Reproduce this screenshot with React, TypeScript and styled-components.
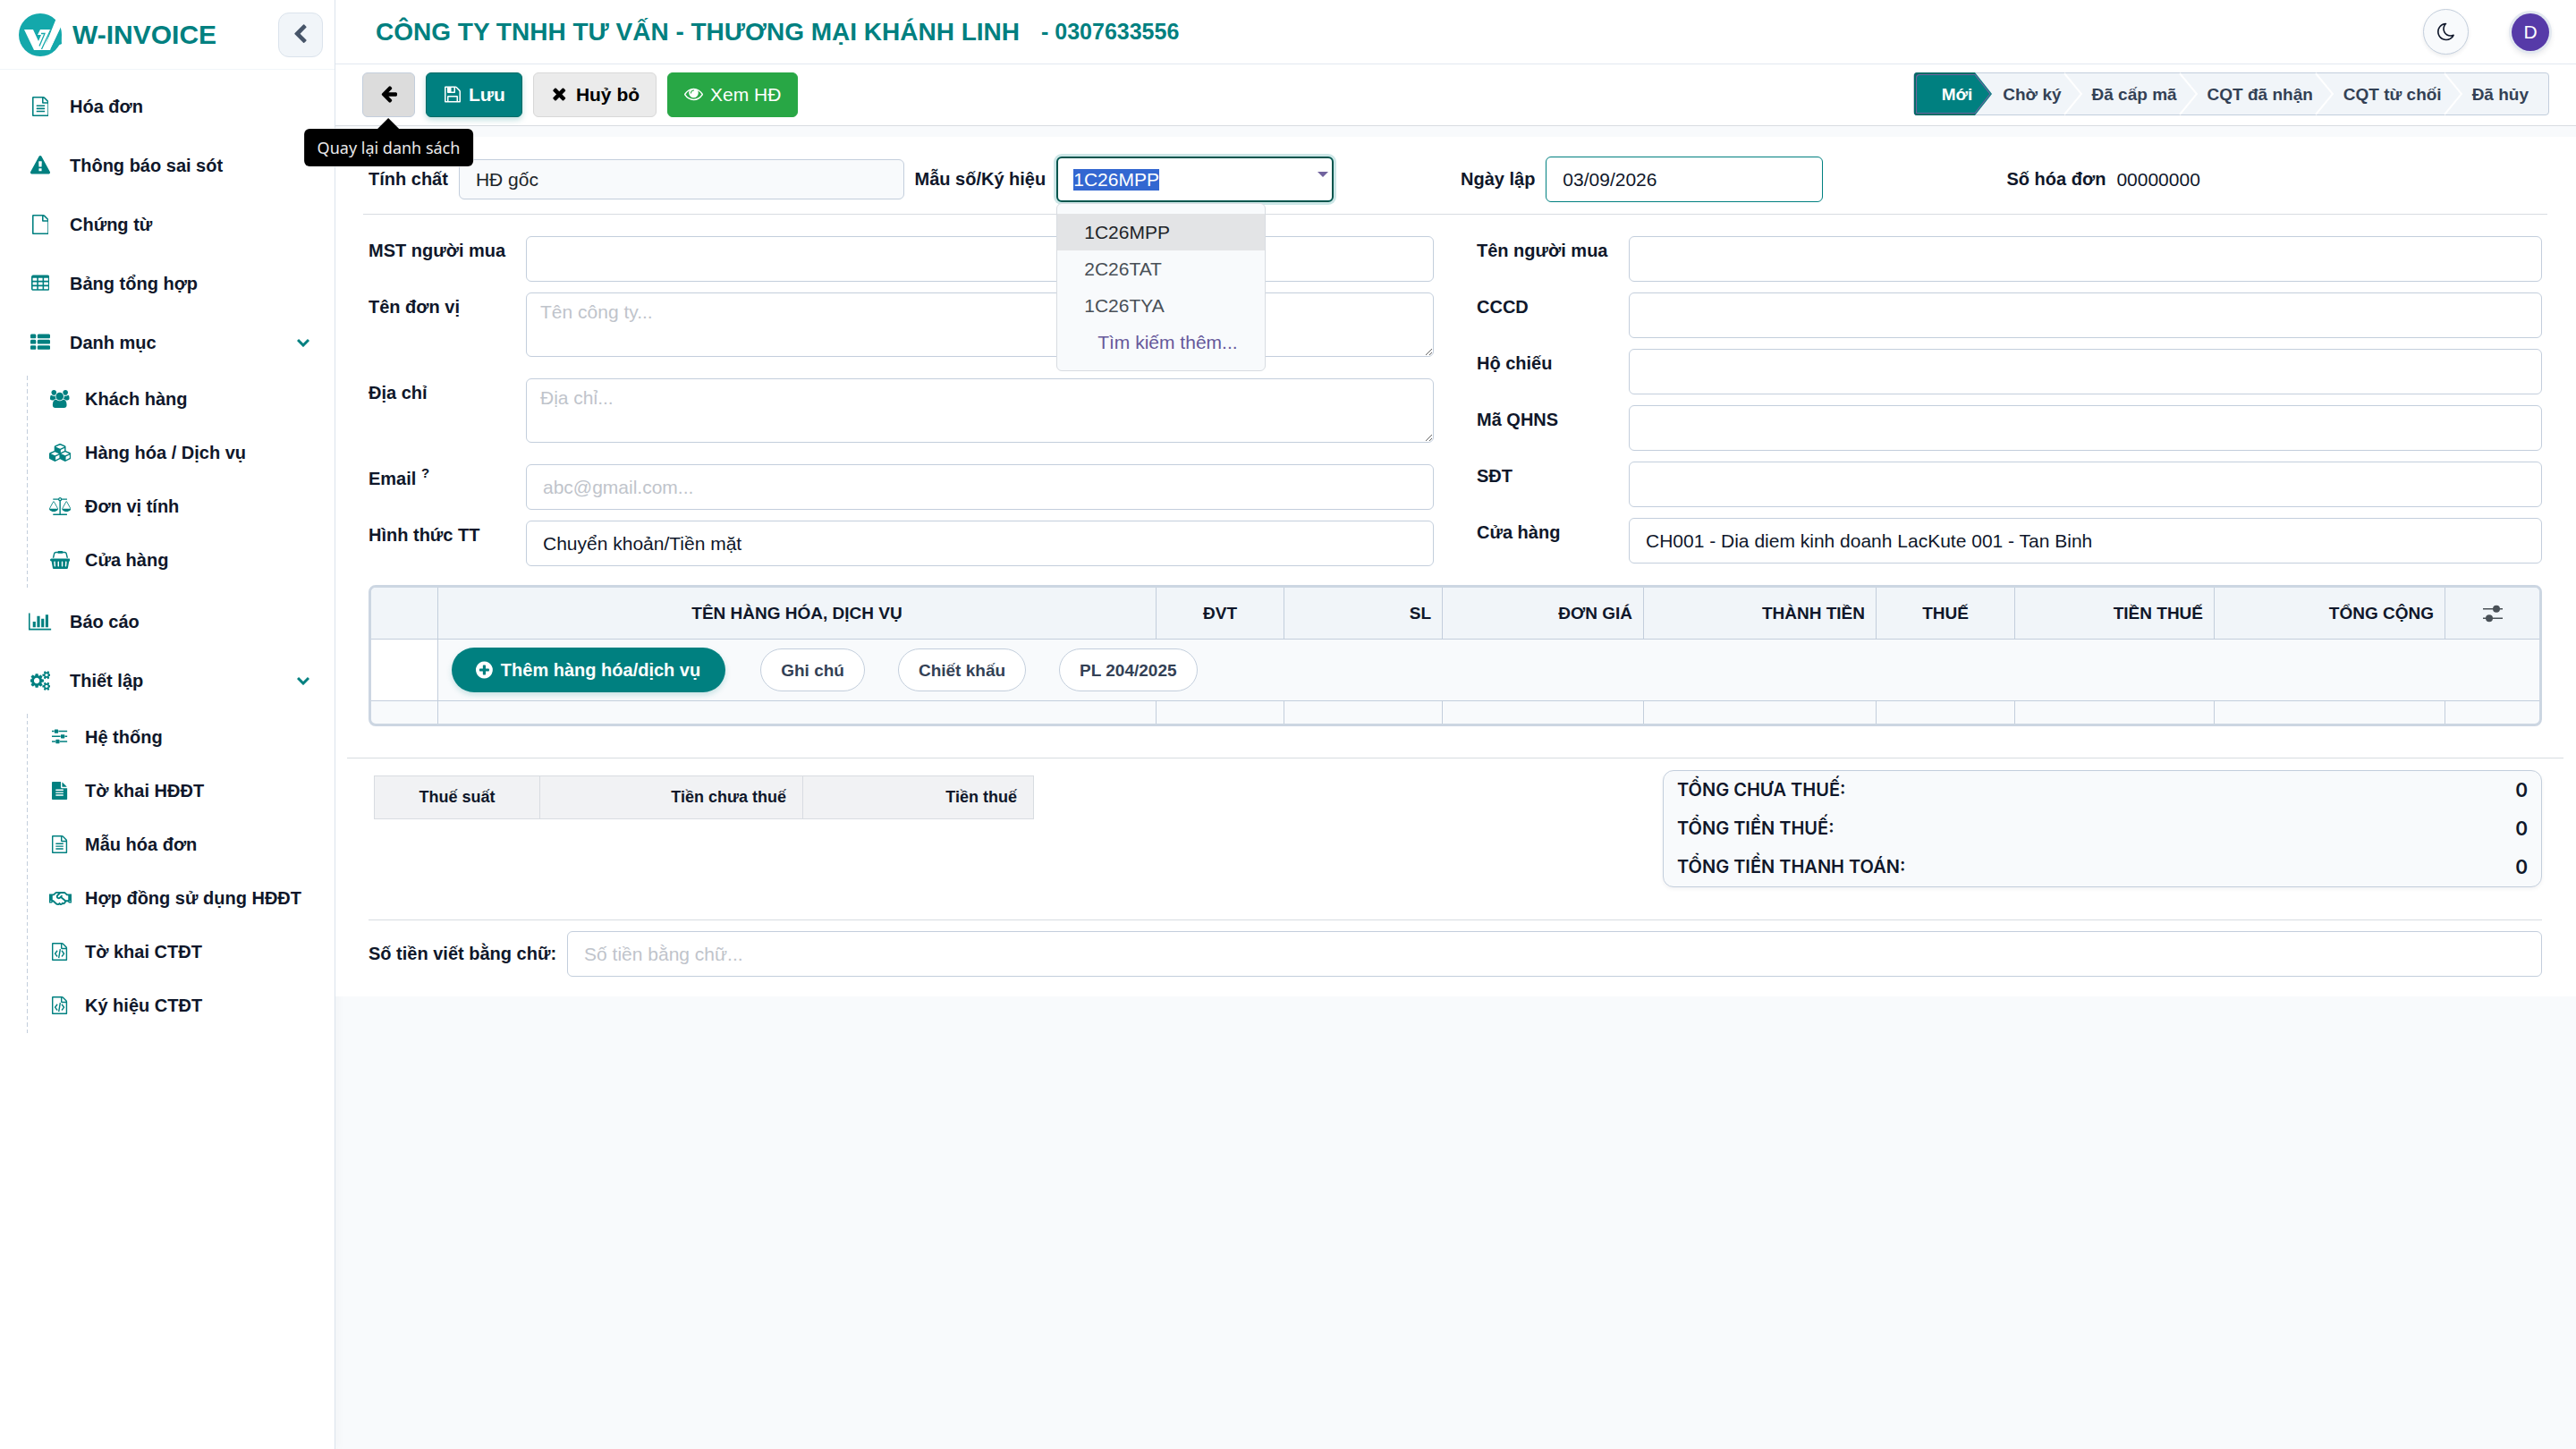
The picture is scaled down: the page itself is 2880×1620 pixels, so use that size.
import React, { useEffect, useRef } from "react";
import styled, { createGlobalStyle, css } from "styled-components";
import { FaRegHandshake } from "react-icons/fa";

const teal = "#008080";
const ink = "#0f172a";
const line = "#c3cedc";
const rule = "#d8dce1";
const soft = "#f8fafc";

const GlobalStyle = createGlobalStyle`
  *, *::before, *::after { box-sizing: border-box; }
  html, body, #root { height: 100%; }
  body {
    margin: 0;
    background: ${soft};
    color: ${ink};
    font-family: "Liberation Sans", Arial, sans-serif;
    font-size: 21px;
    line-height: 31px;
  }
  button, input, textarea { font: inherit; color: inherit; }
  button { cursor: pointer; }
`;

/* ---------- icons ---------- */

type Glyph = { box: string; d: string };

const FILE_OUTLINE =
  "M1596 380q28 28 48 76t20 88v1152q0 40-28 68t-68 28h-1344q-40 0-68-28t-28-68v-1600q0-40 28-68t68-28h896q40 0 88 20t76 48zm-444-244v376h376q-10-29-22-41l-313-313q-12-12-41-22zm384 1528v-1024h-416q-40 0-68-28t-28-68v-416h-768v1536h1280z";
const cell = (x: number, y: number) =>
  `M${x + 352} ${y + 224}v-192q0-14-9-23t-23-9h-320q-14 0-23 9t-9 23v192q0 14 9 23t23 9h320q14 0 23-9t9-23z`;
const bar = (x: number, y: number, w: number) =>
  `M${x + w} ${y + 96}v192q0 40-28 68t-68 28h-${w - 192}q-40 0-68-28t-28-68v-192q0-40 28-68t68-28h${w - 192}q40 0 68 28t28 68z`;
const smallGear = (y: number) =>
  `M1856 ${y}v140q0 16-149 31-12 27-30 52 51 113 51 138 0 4-4 7-122 71-124 71-8 0-46-47t-52-68q-20 2-30 2t-30-2q-14 21-52 68t-46 47q-2 0-124-71-4-3-4-7 0-25 51-138-18-25-30-52-149-15-149-31v-140q0-16 149-31 13-29 30-52-51-113-51-138 0-4 4-7 4-2 35-20t59-34 30-16q8 0 46 46.5t52 67.5q20-2 30-2t30 2q51-71 92-112l6-2q4 0 124 70 4 3 4 7 0 25-51 138 17 23 30 52 149 15 149 31z`;

const glyphs: Record<string, Glyph> = {
  fileText: {
    box: "128 0 1536 1792",
    d: FILE_OUTLINE +
      "M512 800q0-14 9-23t23-9h704q14 0 23 9t9 23v64q0 14-9 23t-23 9h-704q-14 0-23-9t-9-23v-64zm736 224q14 0 23 9t9 23v64q0 14-9 23t-23 9h-704q-14 0-23-9t-9-23v-64q0-14 9-23t23-9h704zm0 256q14 0 23 9t9 23v64q0 14-9 23t-23 9h-704q-14 0-23-9t-9-23v-64q0-14 9-23t23-9h704z",
  },
  file: { box: "128 0 1536 1792", d: FILE_OUTLINE },
  fileCode: {
    box: "128 0 1536 1792",
    d: FILE_OUTLINE +
      "M608 768q8-11 21-12.5t24 6.5l51 38q11 8 12.5 21t-6.5 24l-182 243 182 243q8 11 6.5 24t-12.5 21l-51 38q-11 8-24 6.5t-21-12.5l-226-301q-14-19 0-38zM1184 768q-8-11-21-12.5t-24 6.5l-51 38q-11 8-12.5 21t6.5 24l182 243-182 243q-8 11-6.5 24t12.5 21l51 38q11 8 24 6.5t21-12.5l226-301q14-19 0-38zM788 1526q-13-2-20.5-13t-5.5-24l138-831q2-13 13-20.5t24-5.5l63 10q13 2 20.5 13t5.5 24l-138 831q-2 13-13 20.5t-24 5.5z",
  },
  fileSolid: {
    box: "128 0 1536 1792",
    d: "M1596 476q14 14 28 36h-472v-472q22 14 36 28zm-476 164h544v1056q0 40-28 68t-68 28h-1344q-40 0-68-28t-28-68v-1600q0-40 28-68t68-28h800v544q0 40 28 68t68 28zm160 736v-64q0-14-9-23t-23-9h-704q-14 0-23 9t-9 23v64q0 14 9 23t23 9h704q14 0 23-9t9-23zm0-256v-64q0-14-9-23t-23-9h-704q-14 0-23 9t-9 23v64q0 14 9 23t23 9h704q14 0 23-9t9-23zm0-256v-64q0-14-9-23t-23-9h-704q-14 0-23 9t-9 23v64q0 14 9 23t23 9h704q14 0 23-9t9-23z",
  },
  warning: {
    box: "0 0 1792 1792",
    d: "M1024 1375v-190q0-14-9.5-23.5t-22.5-9.5h-192q-13 0-22.5 9.5t-9.5 23.5v190q0 14 9.5 23.5t22.5 9.5h192q13 0 22.5-9.5t9.5-23.5zm-2-374l18-459q0-12-10-19-13-11-24-11h-220q-11 0-24 11-10 7-10 21l17 457q0 10 10 16.5t24 6.5h185q14 0 23.5-6.5t10.5-16.5zm-14-934l768 1408q35 63-2 126-17 29-46.5 46t-63.5 17h-1536q-34 0-63.5-17t-46.5-46q-37-63-2-126l768-1408q17-31 47-49t65-18 65 18 47 49z",
  },
  table: {
    box: "64 0 1664 1792",
    d: "M1728 288v1088q0 66-47 113t-113 47h-1344q-66 0-113-47t-47-113v-1088q0-66 47-113t113-47h1344q66 0 113 47t47 113z" +
      [224, 736, 1248].map((x) => [384, 768, 1152].map((y) => cell(x, y)).join("")).join(""),
  },
  list: {
    box: "0 0 1792 1792",
    d: [128, 640, 1152].map((y) => bar(0, y, 512) + bar(640, y, 1152)).join(""),
  },
  users: {
    box: "64 0 1920 1792",
    d: "M657 896q-162 5-265 128h-134q-82 0-138-40.5t-56-118.5q0-353 124-353 6 0 43.5 21t97.5 42.5 119 21.5q67 0 133-23-5 37-5 66 0 159 93 256zm1071 637q0 120-73 189.5t-194 69.5h-874q-121 0-194-69.5t-73-189.5q0-53 3.5-103.5t14-109 26.5-108.5 43-97.5 62-81 85.5-53.5 111.5-20q10 0 43 21.5t73 48 107 48 135 21.5 135-21.5 107-48 73-48 43-21.5q61 0 111.5 20t85.5 53.5 62 81 43 97.5 26.5 108.5 14 109 3.5 103.5zm-1024-1277q0 106-75 181t-181 75-181-75-75-181 75-181 181-75 181 75 75 181zm704 384q0 159-112.5 271.5t-271.5 112.5-271.5-112.5-112.5-271.5 112.5-271.5 271.5-112.5 271.5 112.5 112.5 271.5zm576 225q0 78-56 118.5t-138 40.5h-134q-103-123-265-128 93-97 93-256 0-29-5-66 66 23 133 23 59 0 119-21.5t97.5-42.5 43.5-21q124 0 124 353zm-128-609q0 106-75 181t-181 75-181-75-75-181 75-181 181-75 181 75 75 181z",
  },
  cubes: {
    box: "0 0 2176 1792",
    d: "M640 1632l384-192v-314l-384 164v342zm-64-454l404-173-404-173-404 173zm1088 454l384-192v-314l-384 164v342zm-64-454l404-173-404-173-404 173zm-448-293l384-165v-266l-384 164v267zm-64-379l441-189-441-189-441 189zm1088 518v416q0 36-19 67t-52 47l-448 224q-25 14-57 14t-57-14l-448-224q-4-2-7-4-2 2-7 4l-448 224q-25 14-57 14t-57-14l-448-224q-33-16-52-47t-19-67v-416q0-38 21.5-70t56.5-48l434-186v-400q0-38 21.5-70t56.5-48l448-192q23-10 50-10t50 10l448 192q35 16 56.5 48t21.5 70v400l434 186q36 16 57 48t21 70z",
  },
  scale: {
    box: "0 0 2176 1792",
    d: "M1728 448l-384 704h768zm-1280 0l-384 704h768zm821-192q-14 40-45.5 71.5t-71.5 45.5v1291h608q14 0 23 9t9 23v64q0 14-9 23t-23 9h-1344q-14 0-23-9t-9-23v-64q0-14 9-23t23-9h608v-1291q-40-14-71.5-45.5t-45.5-71.5h-491q-14 0-23-9t-9-23v-64q0-14 9-23t23-9h491q21-57 70-92.5t111-35.5 111 35.5 70 92.5h491q14 0 23 9t9 23v64q0 14-9 23t-23 9h-491zm-181 16q33 0 56.5-23.5t23.5-56.5-23.5-56.5-56.5-23.5-56.5 23.5-23.5 56.5 23.5 56.5 56.5 23.5zm1088 880q0 73-46.5 131t-117.5 91-144.5 49.5-139.5 16.5-139.5-16.5-144.5-49.5-117.5-91-46.5-131q0-11 35-81t92-174.5 107-195.5 102-184 56-100q18-33 56-33t56 33q4 7 56 100t102 184 107 195.5 92 174.5 35 81zm-1280 0q0 73-46.5 131t-117.5 91-144.5 49.5-139.5 16.5-139.5-16.5-144.5-49.5-117.5-91-46.5-131q0-11 35-81t92-174.5 107-195.5 102-184 56-100q18-33 56-33t56 33q4 7 56 100t102 184 107 195.5 92 174.5 35 81z",
  },
  basket: {
    box: "128 0 2048 1792",
    d: "M2048 768q53 0 90.5 37.5t37.5 90.5-37.5 90.5-90.5 37.5h-15l-115 662q-8 46-44 76t-82 30h-1280q-46 0-82-30t-44-76l-115-662h-15q-53 0-90.5-37.5t-37.5-90.5 37.5-90.5 90.5-37.5h1792zm-1435 800q26-2 43.5-22.5t15.5-46.5l-32-416q-2-26-22.5-43.5t-46.5-15.5-43.5 22.5-15.5 46.5l32 416q2 25 20.5 42t43.5 17h5zm411-64v-416q0-26-19-45t-45-19-45 19-19 45v416q0 26 19 45t45 19 45-19 19-45zm384 0v-416q0-26-19-45t-45-19-45 19-19 45v416q0 26 19 45t45 19 45-19 19-45zm352 5l32-416q2-26-15.5-46.5t-43.5-22.5-46.5 15.5-22.5 43.5l-32 416q-2 26 15.5 46.5t43.5 22.5h5q25 0 43.5-17t20.5-42zm-1156-1217l-93 412h-132l101-441q19-88 89-143.5t160-55.5h167q0-26 19-45t45-19h384q26 0 45 19t19 45h167q90 0 160 55.5t89 143.5l101 441h-132l-93-412q-11-44-45.5-72t-79.5-28h-167q0 26-19 45t-45 19h-384q-26 0-45-19t-19-45h-167q-45 0-79.5 28t-45.5 72z",
  },
  chart: {
    box: "0 0 2048 1792",
    d: "M640 896v512h-256v-512h256zm384-512v1024h-256v-1024h256zm1024 1152v128h-2048v-1536h128v1408h1920zm-640-896v768h-256v-768h256zm384-384v1152h-256v-1152h256z",
  },
  gears: {
    box: "0 0 1856 1792",
    d: "M832 896q0-106-75-181t-181-75-181 75-75 181 75 181 181 75 181-75 75-181zm768 512q0-52-38-90t-90-38-90 38-38 90q0 53 37.5 90.5t90.5 37.5 90.5-37.5 37.5-90.5zm0-1024q0-52-38-90t-90-38-90 38-38 90q0 53 37.5 90.5t90.5 37.5 90.5-37.5 37.5-90.5zm-384 421v185q0 10-7 19.5t-16 10.5l-155 24q-11 35-32 76 34 48 90 115 7 11 7 20 0 12-7 19-23 30-82.5 89.5t-78.5 59.5q-11 0-21-7l-115-90q-37 19-77 31-11 108-23 155-7 24-30 24h-186q-11 0-20-7.5t-10-17.5l-23-153q-34-10-75-31l-118 89q-7 7-20 7-11 0-21-8-144-133-144-160 0-9 7-19 10-14 41-53t47-61q-23-44-35-82l-152-24q-10-1-17-9.5t-7-19.5v-185q0-10 7-19.5t16-10.5l155-24q11-35 32-76-34-48-90-115-7-11-7-20 0-12 7-20 22-30 82-89t79-59q11 0 21 7l115 90q34-18 77-32 11-108 23-154 7-24 30-24h186q11 0 20 7.5t10 17.5l23 153q34 10 75 31l118-89q8-7 20-7 11 0 21 8 144 133 144 160 0 8-7 19-12 16-42 54t-45 60q23 48 34 82l152 23q10 2 17 10.5t7 19.5z" +
      smallGear(1338) + smallGear(314),
  },
  sliders: {
    box: "0 128 1536 1792",
    d: "M352 1408v128h-352v-128h352zm352-128q26 0 45 19t19 45v256q0 26-19 45t-45 19h-256q-26 0-45-19t-19-45v-256q0-26 19-45t45-19h256zm160-384v128h-864v-128h864zm-640-512v128h-224v-128h224zm1312 1024v128h-736v-128h736zm-960-1152q26 0 45 19t19 45v256q0 26-19 45t-45 19h-256q-26 0-45-19t-19-45v-256q0-26 19-45t45-19h256zm640 512q26 0 45 19t19 45v256q0 26-19 45t-45 19h-256q-26 0-45-19t-19-45v-256q0-26 19-45t45-19h256zm320 128v128h-224v-128h224zm0-512v128h-864v-128h864z",
  },
  chevronLeft: {
    box: "384 0 1088 1792",
    d: "M1427 301l-531 531 531 531q19 19 19 45t-19 45l-166 166q-19 19-45 19t-45-19l-742-742q-19-19-19-45t19-45l742-742q19-19 45-19t45 19l166 166q19 19 19 45t-19 45z",
  },
  arrowLeft: {
    box: "128 64 1536 1792",
    d: "M1664 896v128q0 53-32.5 90.5t-84.5 37.5h-704l293 294q38 36 38 90t-38 90l-75 76q-37 37-90 37-52 0-91-37l-651-652q-37-37-37-90 0-52 37-91l651-650q38-38 91-38 52 0 90 38l75 74q38 38 38 91t-38 91l-293 293h704q52 0 84.5 37.5t32.5 90.5z",
  },
  floppy: {
    box: "128 0 1536 1792",
    d: "M512 1536h768v-384h-768v384zm896 0h128v-896q0-14-10-38.5t-20-34.5l-281-281q-10-10-34-20t-39-10v416q0 40-28 68t-68 28h-576q-40 0-68-28t-28-68v-416h-128v1280h128v-416q0-40 28-68t68-28h832q40 0 68 28t28 68v416zm-384-928v-320q0-13-9.5-22.5t-22.5-9.5h-192q-13 0-22.5 9.5t-9.5 22.5v320q0 13 9.5 22.5t22.5 9.5h192q13 0 22.5-9.5t9.5-22.5zm640 32v928q0 40-28 68t-68 28h-1344q-40 0-68-28t-28-68v-1344q0-40 28-68t68-28h928q40 0 88 20t76 48l280 280q28 28 48 76t20 88z",
  },
  times: {
    box: "192 64 1408 1792",
    d: "M1490 1322q0 40-28 68l-136 136q-28 28-68 28t-68-28l-294-294-294 294q-28 28-68 28t-68-28l-136-136q-28-28-28-68t28-68l294-294-294-294q-28-28-28-68t28-68l136-136q28-28 68-28t68 28l294 294 294-294q28-28 68-28t68 28l136 136q28 28 28 68t-28 68l-294 294 294 294q28 28 28 68z",
  },
  eye: {
    box: "0 64 1792 1792",
    d: "M1664 960q-152-236-381-353 61 104 61 225 0 185-131.5 316.5t-316.5 131.5-316.5-131.5-131.5-316.5q0-121 61-225-229 117-381 353 133 205 333.5 326.5t434.5 121.5 434.5-121.5 333.5-326.5zm-720-384q0-20-14-34t-34-14q-125 0-214.5 89.5t-89.5 214.5q0 20 14 34t34 14 34-14 14-34q0-86 61-147t147-61q20 0 34-14t14-34zm848 384q0 34-20 69-140 230-376.5 368.5t-499.5 138.5-499.5-139-376.5-368q-20-35-20-69t20-69q140-229 376.5-368t499.5-139 499.5 139 376.5 368q20 35 20 69z",
  },
  plusCircle: {
    box: "128 0 1536 1792",
    d: "M1344 960v-128q0-26-19-45t-45-19h-256v-256q0-26-19-45t-45-19h-128q-26 0-45 19t-19 45v256h-256q-26 0-45 19t-19 45v128q0 26 19 45t45 19h256v256q0 26 19 45t45 19h128q26 0 45-19t19-45v-256h256q26 0 45-19t19-45zm320-64q0 209-103 385.5t-279.5 279.5-385.5 103-385.5-103-279.5-279.5-103-385.5 103-385.5 279.5-279.5 385.5-103 385.5 103 279.5 279.5 103 385.5z",
  },
  moon: {
    box: "128 0 1536 1792",
    d: "M1390 1303q-54 9-110 9-182 0-337-90t-245-245-90-337q0-192 104-357-201 60-328.5 229t-127.5 384q0 130 51 248.5t136.5 204 204 136.5 248.5 51q144 0 273.5-61.5t220.5-171.5zm203-85q-94 203-283.5 324.5t-413.5 121.5q-156 0-298-61t-245-164-164-245-61-298q0-153 57.5-292.5t156-241.5 235.5-164.5 290-68.5q44-2 61 39 18 41-15 72-86 78-131.5 181.5t-45.5 218.5q0 148 73 273t198 198 273 73q118 0 228-51 41-18 72 13 14 14 17.5 34t-4.5 38z",
  },
};

function Icon({ name, size }: { name: string; size: number }) {
  const g = glyphs[name];
  return (
    <svg height={size} viewBox={g.box} fill="currentColor" fillRule="evenodd" aria-hidden="true">
      <path d={g.d} />
    </svg>
  );
}

function Logo() {
  return (
    <svg width="48" height="48" viewBox="0 0 48 48" aria-hidden="true">
      <circle cx="24" cy="24" r="24" fill="#14a8ab" />
      <path d="M41.5 6.500 48 14 46 18 35 41H17L6 18h10l6 13 3-7h-4l3-6h11.500l-5.500 17z" fill="#fff" />
      <path d="M47 15.500 35.500 40 48 34z" fill="#14a8ab" />
      <path d="M35.500 18.500 25.500 40M25 22.500l4 0-6 14" fill="none" stroke="#14a8ab" strokeWidth="1.300" />
    </svg>
  );
}

/* ---------- sidebar ---------- */

const Shell = styled.div`
  display: grid;
  grid-template-columns: 375px minmax(0, 1fr);
  min-height: 100%;
`;
const Sidebar = styled.aside`
  background: #fff;
  border-right: 1px solid #dbe3ec;
  box-shadow: 2px 0 12px rgba(15, 23, 42, 0.03);
`;
const Brand = styled.div`
  display: flex;
  align-items: center;
  height: 78px;
  padding: 0 13px 0 21px;
  border-bottom: 1px solid #f1f5f9;
`;
const BrandName = styled.strong`
  flex: 1;
  margin-left: 12px;
  color: ${teal};
  font-size: 30px;
`;
const Collapse = styled.button`
  display: grid;
  place-items: center;
  width: 50px;
  height: 50px;
  padding: 0;
  border: 1px solid #dbe3ec;
  border-radius: 12px;
  background: #f1f5f9;
  color: #475569;
`;
const Nav = styled.nav`
  padding-top: 8px;
  font-size: 20px;
  font-weight: 700;
`;
const NavLink = styled.a`
  display: grid;
  grid-template-columns: 34px 1fr auto;
  column-gap: 16px;
  align-items: center;
  height: 66px;
  padding: 0 28px;
  color: ${ink};
  text-decoration: none;
`;
const IconCell = styled.span`
  display: grid;
  place-items: center;
  color: ${teal};
`;
const SubMenu = styled.div`
  display: grid;
  row-gap: 8px;
  margin: 4px 0 2px 30px;
  padding: 0 0 8px 20px;
  background: repeating-linear-gradient(
      ${line} 0 5px, transparent 5px 8px, ${line} 8px 12px, transparent 12px 15px
    ) 0 0 / 1px 100% no-repeat;
`;
const SubLink = styled.a`
  display: grid;
  grid-template-columns: 34px 1fr;
  column-gap: 11px;
  align-items: center;
  height: 52px;
  color: ${ink};
  text-decoration: none;
`;

function NavItem({ icon, label, open }: { icon: string; label: string; open?: boolean }) {
  return (
    <NavLink href="#">
      <IconCell><Icon name={icon} size={22} /></IconCell>
      {label}
      {open && (
        <svg width="14" height="10" viewBox="0 0 14 10" fill="none" stroke={teal} strokeWidth="3" aria-hidden="true">
          <path d="M1 2 7 8l6-6" />
        </svg>
      )}
    </NavLink>
  );
}
function SubItem({ icon, label }: { icon: string; label: string }) {
  return (
    <SubLink href="#">
      <IconCell>{icon === "handshake" ? <FaRegHandshake size={25} /> : <Icon name={icon} size={20} />}</IconCell>
      {label}
    </SubLink>
  );
}

/* ---------- top bars ---------- */

const Topbar = styled.header`
  display: flex;
  align-items: center;
  height: 72px;
  padding: 0 30px 0 45px;
  border-bottom: 1px solid #e2e8f0;
  background: #fff;
  color: ${teal};
`;
const Company = styled.h1`
  margin: 0 24px 0 0;
  font-size: 28px;
`;
const TaxCode = styled.strong`
  flex: 1;
  font-size: 25px;
`;
const RoundButton = styled.button`
  display: grid;
  place-items: center;
  width: 51px;
  height: 51px;
  margin-right: 48px;
  padding: 0;
  border: 1px solid ${line};
  border-radius: 50%;
  background: ${soft};
  color: ${ink};
  box-shadow: 0 2px 4px rgba(15, 23, 42, 0.08);
`;
const Avatar = styled.button`
  width: 42px;
  height: 42px;
  padding: 0;
  border: 0;
  border-radius: 50%;
  background: #563aa8;
  color: #fff;
  box-shadow: 0 0 0 3px #e2e8f0, 0 3px 6px 2px rgba(15, 23, 42, 0.1);
`;
const ControlBar = styled.div`
  display: flex;
  align-items: center;
  justify-content: space-between;
  height: 69px;
  padding: 0 30px;
  border-bottom: 1px solid ${rule};
  background: #fff;
`;
const Actions = styled.div`
  display: flex;
  gap: 12px;
  margin-bottom: 1px;
`;
const tones = {
  back: css`background: #dcdcdc; border-color: ${line}; color: #000;`,
  primary: css`background: ${teal}; border-color: #006b66; color: #fff; box-shadow: 0 3px 6px rgba(0, 128, 128, 0.25);`,
  plain: css`background: #ebebeb; border-color: #d8d8d8; color: #000;`,
  success: css`background: #28a745; border-color: #28a745; color: #fff;`,
};
const ActionButton = styled.button<{ $tone: keyof typeof tones; $bold?: boolean }>`
  position: relative;
  display: flex;
  align-items: center;
  gap: 8px;
  height: 50px;
  padding: 0 18px;
  border: 1px solid;
  border-radius: 6px;
  font-weight: ${(p) => (p.$bold ? 700 : 400)};
  ${(p) => tones[p.$tone]}
`;
const ActionIcon = styled.span`
  display: grid;
  place-items: center;
  width: 21px;
`;
const Tooltip = styled.span`
  position: absolute;
  z-index: 5;
  top: 62px;
  left: 50%;
  transform: translateX(-50%);
  padding: 6px 15px;
  border-radius: 6px;
  background: #000;
  color: #e9e9e9;
  font-family: "Noto Sans", sans-serif;
  font-size: 18px;
  font-weight: 400;
  line-height: 30px;
  white-space: nowrap;
  box-shadow: 0 0 0 1px rgba(255, 255, 255, 0.6);
  &::before {
    content: "";
    position: absolute;
    bottom: 100%;
    left: 50%;
    margin-left: -12px;
    border: 12px solid transparent;
    border-top: 0;
    border-bottom-color: #000;
  }
`;
const Steps = styled.ol`
  display: flex;
  height: 48px;
  margin: 0 0 2px;
  padding: 0;
  border: 1px solid ${line};
  border-radius: 4px;
  background: #f1f5f9;
  list-style: none;
`;
const StepButton = styled.button<{ $active?: boolean; $last?: boolean }>`
  position: relative;
  height: 48px;
  margin: -1px 0;
  padding: 0 ${(p) => (p.$last ? 22 : 3)}px 0 31px;
  border: 0;
  border-radius: ${(p) => (p.$active ? "4px 0 0 4px" : "0")};
  background: ${(p) => (p.$active ? teal : "transparent")};
  box-shadow: ${(p) =>
    p.$active
      ? "inset 2px 2px #006b66, inset 0 -2px #006b66, inset 3px 3px #71639e, inset 0 -3px #71639e"
      : "none"};
  color: ${(p) => (p.$active ? "#fff" : "#334155")};
  font-size: 19px;
  font-weight: 700;
  svg { position: absolute; z-index: 1; top: 0; left: 100%; overflow: visible; }
`;

/* ---------- form ---------- */

const Sheet = styled.main`
  margin-top: 12px;
  padding: 22px 38px 22px 37px;
  background: #fff;
`;
const HeadRow = styled.div`
  display: grid;
  grid-template-columns: repeat(4, 1fr);
  align-items: center;
  margin-right: -12px;
`;
const HeadCell = styled.div`
  display: flex;
  align-items: center;
  gap: 12px;
  padding-right: 12px;
`;
const Label = styled.label`
  font-size: 20px;
  font-weight: 700;
  white-space: nowrap;
`;
const boxed = css`
  width: 100%;
  border: 1px solid ${line};
  border-radius: 6px;
  outline: 0;
  background: #fff;
  &::placeholder { color: #bfc4cb; opacity: 1; }
`;
const Input = styled.input<{ $kind?: "readonly" | "date" }>`
  ${boxed}
  height: 51px;
  padding: 0 18px;
  ${(p) => p.$kind === "readonly" && css`height: 45px; background: ${soft}; color: #212529;`}
  ${(p) => p.$kind === "date" && css`width: 310px; border-color: ${teal};`}
`;
const TextArea = styled.textarea`
  ${boxed}
  display: block;
  height: 72px;
  padding: 5px 15px;
  resize: vertical;
`;
const Combo = styled.div`
  position: relative;
  width: 310px;
`;
const ComboInput = styled(Input)`
  display: block;
  padding: 0 17px;
  border: 2px solid #00554d;
  box-shadow: 0 0 0 3px rgba(0, 128, 128, 0.2);
  line-height: 31px;
  &::selection { background: #3367d1; color: #fff; }
`;
const Caret = styled.span`
  position: absolute;
  top: 17px;
  right: 6px;
  border: 6px solid transparent;
  border-top-color: #71639e;
  border-bottom: 0;
`;
const Menu = styled.ul`
  position: absolute;
  z-index: 4;
  top: 52px;
  left: 0;
  width: 234px;
  margin: 0;
  padding: 11px 0;
  border: 1px solid ${rule};
  border-radius: 6px;
  background: ${soft};
  list-style: none;
`;
const Option = styled.li<{ $state?: "active" | "more" }>`
  padding: 5px 0 5px ${(p) => (p.$state === "more" ? 45 : 30)}px;
  background: ${(p) => (p.$state === "active" ? "#e3e4e6" : "transparent")};
  color: ${(p) => (p.$state === "active" ? "#212529" : p.$state === "more" ? "#66589a" : "#495057")};
`;
const Rule = styled.hr<{ $bleed: number; $top: number; $bottom: number }>`
  height: 1px;
  margin: ${(p) => p.$top}px -${(p) => p.$bleed}px ${(p) => p.$bottom}px;
  border: 0;
  background: ${rule};
`;
const Columns = styled.div`
  display: grid;
  grid-template-columns: 1fr 1fr;
  gap: 48px;
`;
const Fields = styled.div<{ $label: number }>`
  display: flex;
  flex-direction: column;
  gap: 12px;
  --label: ${(p) => p.$label}px;
`;
const FieldRow = styled.div<{ $tall?: boolean }>`
  display: grid;
  grid-template-columns: var(--label) 1fr;
  align-items: start;
  margin-bottom: ${(p) => (p.$tall ? 12 : 0)}px;
  ${Label} { padding-top: 1px; }
`;
const Hint = styled.sup`
  font-size: 15px;
  line-height: 0;
`;

type FieldProps = {
  id: string;
  label: string;
  hint?: boolean;
  area?: boolean;
  value?: string;
  placeholder?: string;
};

function Field({ id, label, hint, area, value, placeholder }: FieldProps) {
  return (
    <FieldRow $tall={area}>
      <Label htmlFor={id}>{label}{hint && <> <Hint>?</Hint></>}</Label>
      {area ? (
        <TextArea id={id} placeholder={placeholder} />
      ) : (
        <Input id={id} defaultValue={value} placeholder={placeholder} />
      )}
    </FieldRow>
  );
}

/* ---------- tables ---------- */

const GridFrame = styled.div`
  margin-top: 21px;
  border: 3px solid #ccd6e2;
  border-radius: 8px;
  overflow: hidden;
  background: ${soft};
`;
const Lines = styled.table`
  width: 100%;
  border-spacing: 0;
  table-layout: fixed;
  td, th { padding: 0; border-right: 1px solid ${line}; }
  td:last-child, th:last-child { border-right: 0; }
`;
const Th = styled.th<{ $align?: string; $w?: number }>`
  && { padding: 0 12px; border-bottom: 1px solid ${line}; }
  width: ${(p) => (p.$w ? `${p.$w}px` : "auto")};
  height: 58px;
  background: #f1f5f9;
  font-size: 19px;
  text-align: ${(p) => p.$align ?? "center"};
  svg { display: block; margin: 0 auto; }
`;
const ActionTd = styled.td<{ $blank?: boolean }>`
  && { padding: ${(p) => (p.$blank ? 0 : "0 15px")}; border-bottom: 1px solid ${line}; }
  height: 69px;
  background: ${(p) => (p.$blank ? "#fff" : soft)};
`;
const EmptyTd = styled.td`
  height: 25px;
`;
const LineActions = styled.div`
  display: flex;
  align-items: center;
`;
const AddLine = styled.button`
  display: flex;
  align-items: center;
  gap: 9px;
  height: 50px;
  margin-right: 39px;
  padding: 0 28px 0 27px;
  border: 0;
  border-radius: 25px;
  background: ${teal};
  color: #fff;
  font-size: 20px;
  font-weight: 700;
  box-shadow: 0 3px 6px rgba(0, 128, 128, 0.2);
`;
const Pill = styled.button`
  height: 48px;
  margin-right: 37px;
  padding: 0 22px;
  border: 1px solid ${line};
  border-radius: 24px;
  background: #fff;
  color: #334155;
  font-size: 19px;
  font-weight: 700;
`;
const Summary = styled.div`
  display: flex;
  align-items: flex-start;
  justify-content: space-between;
  padding-left: 6px;
`;
const TaxTable = styled.table`
  width: 737px;
  margin-top: 6px;
  border-collapse: collapse;
  table-layout: fixed;
  font-size: 18px;
`;
const TaxTh = styled.th<{ $w: number; $center?: boolean }>`
  width: ${(p) => p.$w}px;
  height: 48px;
  padding: 0 18px;
  border: 1px solid ${rule};
  background: #f1f2f4;
  text-align: ${(p) => (p.$center ? "center" : "right")};
`;
const Totals = styled.dl`
  display: grid;
  grid-template-columns: 1fr auto;
  align-content: start;
  row-gap: 12px;
  width: 983px;
  height: 131px;
  margin: 0;
  padding: 6px 15px 0;
  border: 1px solid ${line};
  border-radius: 12px;
  background: ${soft};
  box-shadow: 0 2px 4px rgba(15, 23, 42, 0.05);
  font-family: Inter, sans-serif;
  font-weight: 600;
`;
const TotalName = styled.dt`
  font-size: 20px;
`;
const TotalValue = styled.dd`
  margin: 0;
`;
const WordsRow = styled.div`
  display: flex;
  align-items: center;
  gap: 12px;
`;

export default function App() {
  const symbol = useRef<HTMLInputElement>(null);
  useEffect(() => {
    symbol.current?.focus();
    symbol.current?.select();
  }, []);

  const steps = ["Mới", "Chờ ký", "Đã cấp mã", "CQT đã nhận", "CQT từ chối", "Đã hủy"];
  const columns: [string, string, number | undefined][] = [
    ["TÊN HÀNG HÓA, DỊCH VỤ", "center", undefined],
    ["ĐVT", "center", 143],
    ["SL", "right", 177],
    ["ĐƠN GIÁ", "right", 225],
    ["THÀNH TIỀN", "right", 260],
    ["THUẾ", "center", 155],
    ["TIỀN THUẾ", "right", 223],
    ["TỔNG CỘNG", "right", 258],
  ];

  return (
    <>
      <GlobalStyle />
      <Shell>
        <Sidebar>
          <Brand>
            <Logo />
            <BrandName>W-INVOICE</BrandName>
            <Collapse aria-label="Thu gọn"><Icon name="chevronLeft" size={23} /></Collapse>
          </Brand>
          <Nav>
            <NavItem icon="fileText" label="Hóa đơn" />
            <NavItem icon="warning" label="Thông báo sai sót" />
            <NavItem icon="file" label="Chứng từ" />
            <NavItem icon="table" label="Bảng tổng hợp" />
            <NavItem icon="list" label="Danh mục" open />
            <SubMenu>
              <SubItem icon="users" label="Khách hàng" />
              <SubItem icon="cubes" label="Hàng hóa / Dịch vụ" />
              <SubItem icon="scale" label="Đơn vị tính" />
              <SubItem icon="basket" label="Cửa hàng" />
            </SubMenu>
            <NavItem icon="chart" label="Báo cáo" />
            <NavItem icon="gears" label="Thiết lập" open />
            <SubMenu>
              <SubItem icon="sliders" label="Hệ thống" />
              <SubItem icon="fileSolid" label="Tờ khai HĐĐT" />
              <SubItem icon="fileText" label="Mẫu hóa đơn" />
              <SubItem icon="handshake" label="Hợp đồng sử dụng HĐĐT" />
              <SubItem icon="fileCode" label="Tờ khai CTĐT" />
              <SubItem icon="fileCode" label="Ký hiệu CTĐT" />
            </SubMenu>
          </Nav>
        </Sidebar>

        <div>
          <Topbar>
            <Company>CÔNG TY TNHH TƯ VẤN - THƯƠNG MẠI KHÁNH LINH</Company>
            <TaxCode>- 0307633556</TaxCode>
            <RoundButton aria-label="Chế độ tối"><Icon name="moon" size={23} /></RoundButton>
            <Avatar>D</Avatar>
          </Topbar>

          <ControlBar>
            <Actions>
              <ActionButton $tone="back" aria-label="Quay lại">
                <ActionIcon><Icon name="arrowLeft" size={21} /></ActionIcon>
                <Tooltip role="tooltip">Quay lại danh sách</Tooltip>
              </ActionButton>
              <ActionButton $tone="primary" $bold>
                <ActionIcon><Icon name="floppy" size={21} /></ActionIcon>Lưu
              </ActionButton>
              <ActionButton $tone="plain" $bold>
                <ActionIcon><Icon name="times" size={21} /></ActionIcon>Huỷ bỏ
              </ActionButton>
              <ActionButton $tone="success">
                <ActionIcon><Icon name="eye" size={21} /></ActionIcon>Xem HĐ
              </ActionButton>
            </Actions>
            <Steps>
              {steps.map((s, i) => (
                <li key={s}>
                  <StepButton $active={i === 0} $last={i === steps.length - 1}>
                    {s}
                    {i === 0 && (
                      <svg width="19" height="48" viewBox="0 0 19 48" aria-hidden="true">
                        <path d="M0 0 19 24 0 48z" fill={teal} />
                        <path d="M-1 2.500H0L17 24 0 45.500h-1" fill="none" stroke="#71639e" strokeWidth="1.200" />
                      </svg>
                    )}
                    {i > 0 && i < steps.length - 1 && (
                      <svg width="20" height="48" viewBox="0 0 20 48" aria-hidden="true">
                        <path d="M0 1 19 24 0 47" fill="none" stroke="#fff" strokeWidth="2" />
                      </svg>
                    )}
                  </StepButton>
                </li>
              ))}
            </Steps>
          </ControlBar>

          <Sheet>
            <HeadRow>
              <HeadCell>
                <Label htmlFor="kind">Tính chất</Label>
                <Input id="kind" $kind="readonly" readOnly defaultValue="HĐ gốc" />
              </HeadCell>
              <HeadCell>
                <Label htmlFor="symbol">Mẫu số/Ký hiệu</Label>
                <Combo>
                  <ComboInput id="symbol" ref={symbol} defaultValue="1C26MPP" />
                  <Caret />
                  <Menu>
                    <Option $state="active">1C26MPP</Option>
                    <Option>2C26TAT</Option>
                    <Option>1C26TYA</Option>
                    <Option $state="more">Tìm kiếm thêm...</Option>
                  </Menu>
                </Combo>
              </HeadCell>
              <HeadCell>
                <Label htmlFor="date">Ngày lập</Label>
                <Input id="date" $kind="date" defaultValue="03/09/2026" />
              </HeadCell>
              <HeadCell>
                <Label as="span">Số hóa đơn</Label>
                <span>00000000</span>
              </HeadCell>
            </HeadRow>

            <Rule $bleed={6} $top={13} $bottom={24} />

            <Columns>
              <Fields $label={176}>
                <Field id="mst" label="MST người mua" />
                <Field id="unit" label="Tên đơn vị" area placeholder="Tên công ty..." />
                <Field id="addr" label="Địa chỉ" area placeholder="Địa chỉ..." />
                <Field id="email" label="Email" hint placeholder="abc@gmail.com..." />
                <Field id="pay" label="Hình thức TT" value="Chuyển khoản/Tiền mặt" />
              </Fields>
              <Fields $label={170}>
                <Field id="buyer" label="Tên người mua" />
                <Field id="cccd" label="CCCD" />
                <Field id="passport" label="Hộ chiếu" />
                <Field id="qhns" label="Mã QHNS" />
                <Field id="phone" label="SĐT" />
                <Field id="store" label="Cửa hàng" value="CH001 - Dia diem kinh doanh LacKute 001 - Tan Binh" />
              </Fields>
            </Columns>

            <GridFrame>
              <Lines>
                <thead>
                  <tr>
                    <Th $w={75} aria-label="STT" />
                    {columns.map(([name, align, w]) => (
                      <Th key={name} $align={align} $w={w}>{name}</Th>
                    ))}
                    <Th $w={105} aria-label="Tùy chọn">
                      <svg width="22" height="20" viewBox="0 0 22 20" fill="#495057" aria-hidden="true">
                        <path d="M0 4h22v1.500H0zM0 14.500h22V16H0z" />
                        <circle cx="15" cy="4.750" r="4" />
                        <circle cx="7" cy="15.250" r="4" />
                      </svg>
                    </Th>
                  </tr>
                </thead>
                <tbody>
                  <tr>
                    <ActionTd $blank />
                    <ActionTd colSpan={9}>
                      <LineActions>
                        <AddLine><Icon name="plusCircle" size={22} />Thêm hàng hóa/dịch vụ</AddLine>
                        <Pill>Ghi chú</Pill>
                        <Pill>Chiết khấu</Pill>
                        <Pill>PL 204/2025</Pill>
                      </LineActions>
                    </ActionTd>
                  </tr>
                  <tr>
                    {Array.from({ length: 10 }, (_, i) => <EmptyTd key={i} />)}
                  </tr>
                </tbody>
              </Lines>
            </GridFrame>

            <Rule $bleed={24} $top={35} $bottom={13} />

            <Summary>
              <TaxTable>
                <thead>
                  <tr>
                    <TaxTh $w={185} $center>Thuế suất</TaxTh>
                    <TaxTh $w={294}>Tiền chưa thuế</TaxTh>
                    <TaxTh $w={258}>Tiền thuế</TaxTh>
                  </tr>
                </thead>
              </TaxTable>
              <Totals>
                <TotalName>TỔNG CHƯA THUẾ:</TotalName><TotalValue>0</TotalValue>
                <TotalName>TỔNG TIỀN THUẾ:</TotalName><TotalValue>0</TotalValue>
                <TotalName>TỔNG TIỀN THANH TOÁN:</TotalName><TotalValue>0</TotalValue>
              </Totals>
            </Summary>

            <Rule $bleed={0} $top={36} $bottom={12} />

            <WordsRow>
              <Label htmlFor="words">Số tiền viết bằng chữ:</Label>
              <Input id="words" placeholder="Số tiền bằng chữ..." />
            </WordsRow>
          </Sheet>
        </div>
      </Shell>
    </>
  );
}
